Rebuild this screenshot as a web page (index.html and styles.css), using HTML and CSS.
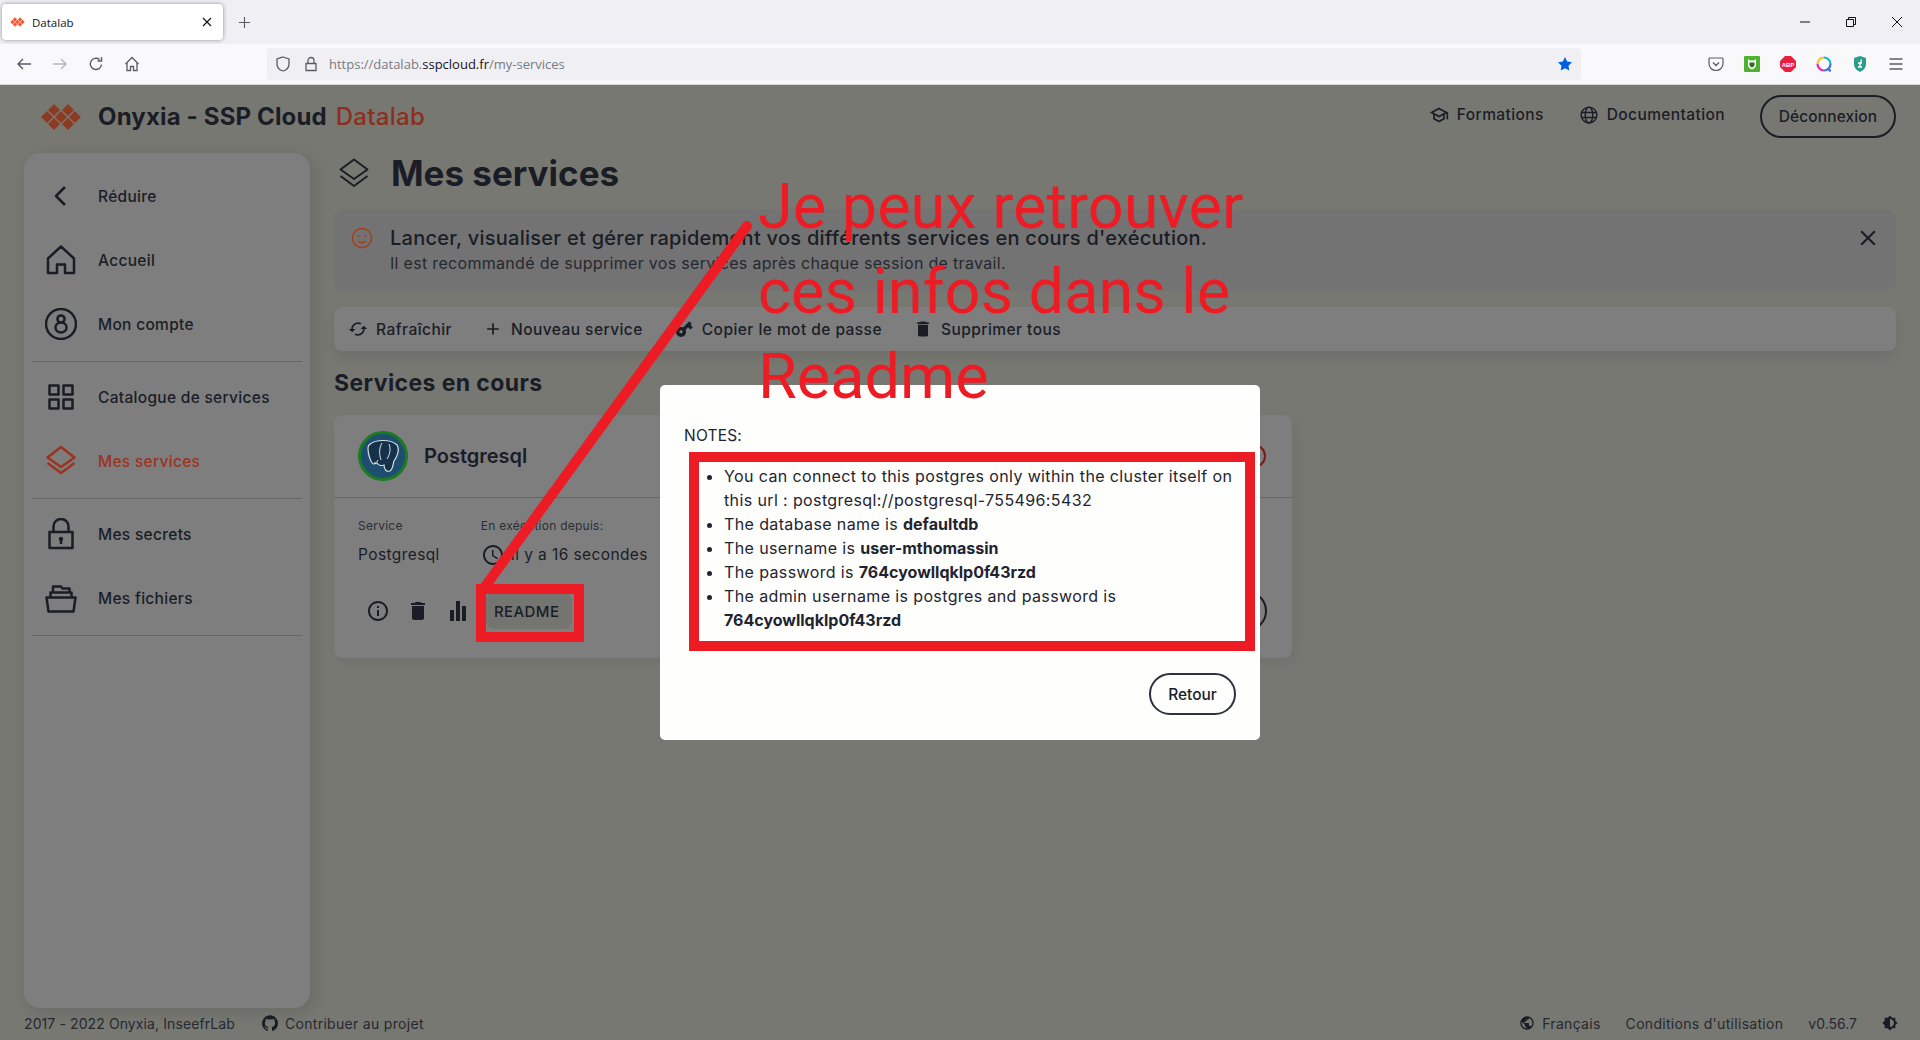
FILE: index.html
```html
<!DOCTYPE html>
<html lang="fr">
<head>
  <meta charset="UTF-8">
  <title>Datalab</title>
  <link rel="stylesheet" href="styles.css">
</head>
<body>

  <!-- browser chrome -->
  <div class="tabstrip">
    <div class="tab">
      <svg class="favicon" viewBox="0 0 42 26"><g fill="#ff562c"><path d="M14 0l6 6-6 6-6-6zM28 0l6 6-6 6-6-6zM7 7l6 6-6 6-6-6zM21 7l6 6-6 6-6-6zM35 7l6 6-6 6-6-6zM14 14l6 6-6 6-6-6zM28 14l6 6-6 6-6-6z"/></g></svg>
      <span class="tab-title">Datalab</span>
      <svg class="tab-close" viewBox="0 0 12 12"><path d="M2 2l8 8M10 2l-8 8" stroke="#15141a" stroke-width="1.2"/></svg>
    </div>
    <svg class="newtab" viewBox="0 0 14 14"><path d="M7 1v12M1 7h12" stroke="#5b5b66" stroke-width="1.2"/></svg>
    <div class="winbtns">
      <svg viewBox="0 0 12 12"><path d="M1 6h10" stroke="#111" stroke-width="1"/></svg>
      <svg viewBox="0 0 12 12"><path d="M1.5 3.5h7v7h-7zM3.5 3.5v-2h7v7h-2" fill="none" stroke="#111" stroke-width="1"/></svg>
      <svg viewBox="0 0 12 12"><path d="M1 1l10 10M11 1L1 11" stroke="#111" stroke-width="1"/></svg>
    </div>
  </div>
  <div class="navbar">
    <div class="navbtns">
      <svg viewBox="0 0 16 16"><path d="M15 8H2M7 3L2 8l5 5" fill="none" stroke="#5b5b66" stroke-width="1.4"/></svg>
      <svg viewBox="0 0 16 16"><path d="M1 8h13M9 3l5 5-5 5" fill="none" stroke="#b4b4ba" stroke-width="1.4"/></svg>
      <svg viewBox="0 0 16 16"><path d="M13.5 8.5A5.6 5.6 0 1 1 11.5 3.6M13.5 1v4h-4" fill="none" stroke="#5b5b66" stroke-width="1.4"/></svg>
      <svg viewBox="0 0 16 16"><path d="M1.5 8L8 1.5 14.5 8M3 7v7.5h3.500v-4h3v4H13V7" fill="none" stroke="#5b5b66" stroke-width="1.3"/></svg>
    </div>
    <div class="urlbar">
      <svg class="url-shield" viewBox="0 0 16 16"><path d="M8 1l6 2v5c0 3.500-2.500 6-6 7-3.500-1-6-3.500-6-7V3z" fill="none" stroke="#5b5b66" stroke-width="1.3"/></svg>
      <svg class="url-lock" viewBox="0 0 16 16"><path d="M3 7.500h10v7H3zM5 7.500V4.500a3 3 0 0 1 6 0v3" fill="none" stroke="#5b5b66" stroke-width="1.3"/></svg>
      <span class="url">https://datalab.<b>sspcloud.fr</b>/my-services</span>
      <svg class="url-star" viewBox="0 0 24 24"><path d="M12 1.500l3.200 6.800 7.300 1-5.300 5.200 1.300 7.400L12 18.400l-6.500 3.500 1.300-7.400L1.500 9.300l7.300-1z" fill="#0060df"/></svg>
    </div>
    <div class="extensions">
      <svg viewBox="0 0 16 16"><path d="M2 2h12a1 1 0 0 1 1 1v4.500C15 11.500 12 14.500 8 14.500S1 11.500 1 7.500V3a1 1 0 0 1 1-1z" fill="none" stroke="#5b5b66" stroke-width="1.2"/><path d="M5 6.500l3 3 3-3" fill="none" stroke="#5b5b66" stroke-width="1.4"/></svg>
      <svg viewBox="0 0 16 16"><rect width="16" height="16" rx="1" fill="#4fb131"/><path d="M4 3l2 1.500h4L12 3v6c0 2-2 3.500-4 4.500C6 12.500 4 11 4 9z" fill="#fff"/><path d="M5.500 6.500h5V9c0 1-1.200 2-2.500 2.500C6.700 11 5.500 10 5.500 9z" fill="#2c6e1c"/></svg>
      <svg viewBox="0 0 16 16"><path d="M5 0h6l5 5v6l-5 5H5l-5-5V5z" fill="#e8203f"/><text x="8" y="10.500" class="abp">ABP</text></svg>
      <svg viewBox="0 0 16 16"><g fill="none" stroke-width="2.200"><path d="M8 1.500A6.500 6.500 0 0 1 14.500 8" stroke="#19b5c9"/><path d="M14.500 8A6.500 6.500 0 0 1 8 14.500" stroke="#3f6fe0"/><path d="M8 14.500A6.500 6.500 0 0 1 1.500 8" stroke="#e22fa5"/><path d="M1.500 8A6.500 6.500 0 0 1 8 1.500" stroke="#f5c518"/><path d="M12 12l2.500 3.500" stroke="#3f6fe0"/></g></svg>
      <svg viewBox="0 0 16 16"><path d="M8 0l6 2v6c0 3.500-2.500 6.500-6 8-3.500-1.500-6-4.500-6-8V2z" fill="#2d9c8a"/><path d="M9.500 3.500L7.500 11M6 7h4M6 11h4" stroke="#fff" stroke-width="1.300" fill="none"/></svg>
      <svg viewBox="0 0 16 16"><path d="M1.500 3h13M1.500 8h13M1.500 13h13" stroke="#5b5b66" stroke-width="1.300"/></svg>
    </div>
  </div>

  <div class="app">
    <header class="topbar">
      <svg class="logo" viewBox="0 0 42 26"><path d="M14 0l6 6-6 6-6-6zM28 0l6 6-6 6-6-6zM7 7l6 6-6 6-6-6zM21 7l6 6-6 6-6-6zM35 7l6 6-6 6-6-6zM14 14l6 6-6 6-6-6zM28 14l6 6-6 6-6-6z"/></svg>
      <div class="brand">Onyxia - SSP Cloud <span>Datalab</span></div>
      <a class="toplink">
        <svg viewBox="0 0 24 24"><path d="M12 3 1 9l4 2.180v6L12 21l7-3.820v-6l2-1.090V17h2V9L12 3zm6.820 6L12 12.720 5.180 9 12 5.280 18.820 9zM17 15.990l-5 2.730-5-2.730v-3.720L12 15l5-2.730v3.720z"/></svg>
        Formations
      </a>
      <a class="toplink">
        <svg viewBox="0 0 24 24" class="outline"><circle cx="12" cy="12" r="9.500"/><ellipse cx="12" cy="12" rx="4.500" ry="9.500"/><path d="M3 9h18M3 15h18"/></svg>
        Documentation
      </a>
      <button class="logout">Déconnexion</button>
    </header>

    <div class="layout">
      <nav class="sidebar">
        <div class="side-item">
          <svg viewBox="0 0 32 32"><path d="M20 7l-9 9 9 9" class="st"/></svg>
          Réduire
        </div>
        <div class="side-item">
          <svg viewBox="0 0 32 32"><path d="M3 14.500L16 2.500l13 12V29H20v-8.500h-8V29H3z" class="st"/></svg>
          Accueil
        </div>
        <div class="side-item">
          <svg viewBox="0 0 32 32"><circle cx="16" cy="16" r="15" class="st"/><circle cx="16" cy="11" r="3.600" class="st"/><ellipse cx="16" cy="19.500" rx="5.500" ry="5" class="st"/></svg>
          Mon compte
        </div>
        <hr>
        <div class="side-item">
          <svg viewBox="0 0 32 32"><path d="M4.500 4.500h9v9h-9zM18.500 4.500h9v9h-9zM4.500 18.500h9v9h-9zM18.500 18.500h9v9h-9z" class="st"/></svg>
          Catalogue de services
        </div>
        <div class="side-item active">
          <svg viewBox="0 0 32 32"><path d="M16 2l13.500 10.500L16 22 2.500 12.500zM2.500 18L16 28l13.500-10" class="st"/></svg>
          Mes services
        </div>
        <hr>
        <div class="side-item">
          <svg viewBox="0 0 32 32"><path d="M4.500 14h23v16h-23zM8.500 14V8.500a7.500 7.500 0 0 1 15 0V14" class="st"/><circle cx="16" cy="21" r="2.200" class="fl"/><path d="M15 21h2l.3 5h-2.600z" class="fl"/></svg>
          Mes secrets
        </div>
        <div class="side-item">
          <svg viewBox="0 0 32 32"><path d="M1.500 15.500h29l-2 14h-25zM5.500 15.500v-5h21v5M8 10.500V4.500h8l1.500 2h7v4" class="st"/></svg>
          Mes fichiers
        </div>
        <hr>
      </nav>

      <main class="main">
        <div class="page-title">
          <svg viewBox="0 0 32 32"><path d="M16 2.500l13.500 10L16 22 2.500 12.500zM2.500 19L16 29l13.500-10" class="st"/></svg>
          <h1>Mes services</h1>
        </div>

        <div class="alert">
          <svg class="smiley" viewBox="0 0 24 24"><circle cx="12" cy="12" r="9.500"/><circle cx="8.500" cy="10" r="1" class="dot"/><circle cx="15.500" cy="10" r="1" class="dot"/><path d="M8.500 15.500c2 1.500 5 1.500 7 0"/></svg>
          <div class="alert-text">
            <p class="alert-main">Lancer, visualiser et gérer rapidement vos différents services en cours d'exécution.</p>
            <p class="alert-sub">Il est recommandé de supprimer vos services après chaque session de travail.</p>
          </div>
          <svg class="alert-close" viewBox="0 0 24 24"><path d="M19 6.410 17.590 5 12 10.590 6.410 5 5 6.410 10.590 12 5 17.590 6.410 19 12 13.410 17.590 19 19 17.590 13.410 12z"/></svg>
        </div>

        <div class="toolbar">
          <div class="tool"><svg viewBox="0 0 24 24"><path d="M19 8l-4 4h3c0 3.310-2.690 6-6 6-1.010 0-1.970-.25-2.800-.7l-1.460 1.460C8.970 19.540 10.430 20 12 20c4.420 0 8-3.580 8-8h3l-4-4zM6 12c0-3.310 2.690-6 6-6 1.010 0 1.970.25 2.800.7l1.460-1.460C15.030 4.460 13.570 4 12 4c-4.420 0-8 3.580-8 8H1l4 4 4-4H6z"/></svg>Rafraîchir</div>
          <div class="tool"><svg viewBox="0 0 24 24"><path d="M19 13h-6v6h-2v-6H5v-2h6V5h2v6h6v2z"/></svg>Nouveau service</div>
          <div class="tool"><svg viewBox="0 0 24 24"><path transform="rotate(-45 12 12)" d="M12.650 10C11.830 7.670 9.610 6 7 6c-3.310 0-6 2.690-6 6s2.690 6 6 6c2.610 0 4.830-1.670 5.650-4H17v4h4v-4h2v-4H12.650zM7 14c-1.100 0-2-.9-2-2s.9-2 2-2 2 .9 2 2-.9 2-2 2z"/></svg>Copier le mot de passe</div>
          <div class="tool"><svg viewBox="0 0 24 24"><path d="M6 19c0 1.100.9 2 2 2h8c1.100 0 2-.9 2-2V7H6v12zM19 4h-3.500l-1-1h-5l-1 1H5v2h14V4z"/></svg>Supprimer tous</div>
        </div>

        <h2 class="section-title">Services en cours</h2>

        <section class="card">
          <div class="card-head">
            <svg class="pg-logo" viewBox="0 0 50 50">
              <circle cx="25" cy="25" r="23.500" fill="#1d4d6f" stroke="#1c7a25" stroke-width="3"/>
              <path d="M11 14c6-6 22-6 28 0 3 5 0 12-3 16-1 3-1 8-4 10-3 1-6-1-6-6-3 1-6 0-7-2l-3 1c-3 0-6-10-6-15 0-2 0-3 1-4z" fill="#16324a" stroke="#d8dee2" stroke-width="1.200"/>
              <path d="M24 12c-3 5-3 11-1 17M31 13c2 5 1 10-2 15M16 32c2 0 3-1 4-3" fill="none" stroke="#d8dee2" stroke-width="1"/>
            </svg>
            <span class="card-name">Postgresql</span>
            <span class="status-ring"></span>
          </div>
          <div class="card-body">
            <div class="info-row">
              <div class="info-col first">
                <span class="info-label">Service</span>
                <span class="info-value">Postgresql</span>
              </div>
              <div class="info-col">
                <span class="info-label">En exécution depuis:</span>
                <span class="info-value with-icon">
                  <svg viewBox="0 0 24 24"><path d="M12 2C6.480 2 2 6.480 2 12s4.480 10 10 10 10-4.480 10-10S17.520 2 12 2zm0 18c-4.410 0-8-3.590-8-8s3.590-8 8-8 8 3.590 8 8-3.590 8-8 8zm.5-13H11v6l5.200 3.200.8-1.300-4.500-2.700z"/></svg>
                  Il y a 16 secondes
                </span>
              </div>
            </div>
            <div class="actions">
              <span class="action"><svg viewBox="0 0 24 24"><path d="M11 7h2v2h-2zm0 4h2v6h-2zm1-9C6.480 2 2 6.480 2 12s4.480 10 10 10 10-4.480 10-10S17.520 2 12 2zm0 18c-4.410 0-8-3.590-8-8s3.590-8 8-8 8 3.590 8 8-3.590 8-8 8z"/></svg></span>
              <span class="action"><svg viewBox="0 0 24 24"><path d="M6 19c0 1.100.9 2 2 2h8c1.100 0 2-.9 2-2V7H6v12zM19 4h-3.500l-1-1h-5l-1 1H5v2h14V4z"/></svg></span>
              <span class="action"><svg viewBox="0 0 24 24"><path d="M4 11h4v11H4zM10 2h4v20h-4zM16 7h4v15h-4z"/></svg></span>
              <button class="readme">README</button>
              <span class="open-btn"></span>
            </div>
          </div>
        </section>
      </main>
    </div>

    <footer class="footer">
      <span class="copyright">2017 - 2022 Onyxia, InseefrLab</span>
      <span class="foot-link">
        <svg viewBox="0 0 24 24"><path d="M12 .5C5.370.5 0 5.870 0 12.500c0 5.300 3.440 9.800 8.200 11.390.6.110.82-.26.82-.58v-2.030c-3.340.73-4.040-1.610-4.040-1.610-.55-1.390-1.330-1.760-1.330-1.760-1.090-.74.08-.73.08-.73 1.200.09 1.840 1.240 1.840 1.240 1.070 1.830 2.810 1.300 3.500 1 .11-.78.42-1.310.76-1.610-2.670-.3-5.470-1.330-5.470-5.930 0-1.310.47-2.380 1.240-3.220-.13-.3-.54-1.520.11-3.180 0 0 1.010-.32 3.300 1.230a11.500 11.500 0 0 1 6 0c2.290-1.550 3.300-1.230 3.300-1.230.65 1.660.24 2.880.12 3.180.77.84 1.230 1.910 1.230 3.220 0 4.610-2.810 5.630-5.480 5.920.43.37.81 1.100.81 2.220v3.290c0 .32.22.7.82.58A12 12 0 0 0 24 12.500C24 5.870 18.630.5 12 .5z"/></svg>
        Contribuer au projet
      </span>
      <span class="foot-link lang">
        <svg viewBox="0 0 24 24"><path d="M12 2C6.480 2 2 6.480 2 12s4.480 10 10 10 10-4.480 10-10S17.520 2 12 2zm-1 17.930c-3.950-.49-7-3.850-7-7.930 0-.62.08-1.210.21-1.790L9 15v1c0 1.100.9 2 2 2v1.930zm6.900-2.540c-.26-.81-1-1.390-1.900-1.390h-1v-3c0-.55-.45-1-1-1H8v-2h2c.55 0 1-.45 1-1V7h2c1.100 0 2-.9 2-2v-.41c2.930 1.190 5 4.060 5 7.410 0 2.080-.8 3.970-2.100 5.390z"/></svg>
        Français
      </span>
      <span>Conditions d'utilisation</span>
      <span class="version">v0.56.7</span>
      <svg class="theme" viewBox="0 0 24 24"><path d="M20 15.310 23.310 12 20 8.690V4h-4.690L12 .69 8.690 4H4v4.690L.69 12 4 15.310V20h4.690L12 23.310 15.310 20H20v-4.690zM12 18V6c3.310 0 6 2.690 6 6s-2.690 6-6 6z"/></svg>
    </footer>

    <!-- readme dialog -->
    <div class="dialog-wrap">
      <div class="dialog">
        <p class="notes">NOTES:</p>
        <ul class="notes-list">
          <li>You can connect to this postgres only within the cluster itself on<br>this url : postgresql://postgresql-755496:5432</li>
          <li>The database name is <b>defaultdb</b></li>
          <li>The username is <b>user-mthomassin</b></li>
          <li>The password is <b>764cyowllqklp0f43rzd</b></li>
          <li>The admin username is postgres and password is<br><b>764cyowllqklp0f43rzd</b></li>
        </ul>
        <div class="dialog-foot">
          <button class="back">Retour</button>
        </div>
      </div>
    </div>
  </div>

  <!-- red annotations drawn on top of the capture -->
  <svg class="anno-line" viewBox="0 0 1920 1040"><path d="M484 588L747 226" stroke="#ed1c24" stroke-width="10" stroke-linecap="round"/></svg>
  <div class="anno-box"></div>
  <div class="anno-text">Je peux retrouver<br>ces infos dans le<br>Readme</div>

</body>
</html>
```
FILE: styles.css
```css
* {
  box-sizing: border-box;
}

html, body {
  margin: 0;
  height: 1040px;
  overflow: hidden;
}

body {
  position: relative;
  display: flex;
  flex-direction: column;
  font-family: Inter, "Noto Sans", sans-serif;
  color: #1a1d26;
  background: #787873;
}

p, h1, h2 {
  margin: 0;
}

button {
  font-family: inherit;
  cursor: pointer;
}

/* browser chrome */
.tabstrip {
  height: 44px;
  background: #f0f0f4;
  display: flex;
  align-items: center;
  flex: none;
}

.tab {
  width: 221px;
  height: 36px;
  margin-left: 2px;
  background: #fff;
  border-radius: 4px;
  box-shadow: 0 0 4px rgba(0, 0, 0, 0.4);
  display: flex;
  align-items: center;
  padding-left: 8px;
  font-family: "Open Sans", sans-serif;
  font-size: 11.5px;
  color: #15141a;
}

.favicon {
  width: 15px;
  height: 10px;
  margin-right: 7px;
}

.tab-title {
  flex: 1;
}

.tab-close {
  width: 12px;
  height: 12px;
  margin-right: 10px;
}

.newtab {
  width: 13px;
  height: 13px;
  margin-left: 15px;
}

.winbtns {
  margin-left: auto;
  display: flex;
  gap: 34px;
  padding-right: 17px;
}

.winbtns svg {
  width: 12px;
  height: 12px;
}

.navbar {
  height: 41px;
  background: #f9f9fb;
  border-bottom: 1px solid #d8d8dc;
  display: flex;
  align-items: center;
  flex: none;
}

.navbtns {
  width: 267px;
  display: flex;
  gap: 20px;
  padding-left: 16px;
}

.navbtns svg {
  width: 16px;
  height: 16px;
}

.urlbar {
  width: 1314px;
  height: 32px;
  background: #f0f0f4;
  border-radius: 4px;
  display: flex;
  align-items: center;
  padding: 0 8px;
  font-family: "Open Sans", sans-serif;
  font-size: 13px;
  color: #7a7a82;
}

.urlbar svg {
  width: 16px;
  height: 16px;
  flex: none;
}

.url-shield {
  margin-right: 12px;
}

.url-lock {
  margin-right: 10px;
}

.url {
  flex: 1;
}

.url b {
  font-weight: 400;
  color: #15141a;
}

.extensions {
  flex: 1;
  display: flex;
  justify-content: flex-end;
  gap: 20px;
  padding-right: 16px;
}

.extensions svg {
  width: 16px;
  height: 16px;
}

.abp {
  font-family: "Liberation Sans", sans-serif;
  font-size: 6px;
  font-weight: 700;
  fill: #fff;
  text-anchor: middle;
}

/* app */
.app {
  position: relative;
  flex: 1;
  display: flex;
  flex-direction: column;
  min-height: 0;
}

.topbar {
  height: 68px;
  flex: none;
  display: flex;
  align-items: center;
  padding: 0 24px 5px 40px;
}

.logo {
  width: 42px;
  height: 26px;
  fill: #8d3a22;
  margin-right: 16px;
}

.brand {
  font-size: 24px;
  font-weight: 700;
  flex: 1;
  letter-spacing: 0.15px;
}

.brand span {
  color: #8d2f1c;
  font-weight: 500;
  margin-left: 3px;
  letter-spacing: 0.3px;
}

.toplink {
  display: flex;
  align-items: center;
  gap: 8px;
  font-size: 15.5px;
  font-weight: 500;
  letter-spacing: 0.4px;
  margin-right: 35px;
  padding-bottom: 4px;
}

.toplink svg {
  width: 20px;
  height: 20px;
  fill: #1a1d26;
}

.toplink .outline {
  fill: none;
  stroke: #1a1d26;
  stroke-width: 1.7;
}

.logout {
  width: 136px;
  height: 43px;
  border: 2px solid #1a1d26;
  border-radius: 22px;
  background: none;
  color: #1a1d26;
  font-size: 15.5px;
  font-weight: 500;
  letter-spacing: 0.1px;
}

.layout {
  flex: 1;
  display: flex;
  gap: 24px;
  padding: 0 24px;
  min-height: 0;
}

/* sidebar */
.sidebar {
  width: 286px;
  flex: none;
  background: #7e7e7e;
  border-radius: 16px;
  padding-top: 11px;
  box-shadow: 4px 4px 16px rgba(0, 0, 0, 0.12);
}

.side-item {
  height: 64px;
  display: flex;
  align-items: center;
  gap: 21px;
  padding-left: 21px;
  font-size: 15.5px;
  font-weight: 500;
  letter-spacing: 0.3px;
}

.side-item svg {
  width: 32px;
  height: 32px;
}

.st {
  fill: none;
  stroke: currentColor;
  stroke-width: 2.5;
  stroke-linejoin: round;
}

.fl {
  fill: currentColor;
}

.side-item.active {
  color: #9c3320;
}

.sidebar hr {
  margin: 5px 8px 3px;
  height: 1px;
  border: 0;
  background: #666668;
}

/* main column */
.main {
  flex: 1;
  min-width: 0;
}

.page-title {
  height: 40px;
  display: flex;
  align-items: center;
  gap: 21px;
  padding-left: 4px;
}

.page-title svg {
  width: 32px;
  height: 32px;
}

.page-title .st {
  stroke-width: 2;
}

.page-title h1 {
  font-size: 35px;
  font-weight: 700;
}

.alert {
  margin-top: 16px;
  height: 82px;
  background: #737373;
  border-radius: 10px;
  display: flex;
  padding: 17px 16px 0;
  gap: 16px;
}

.smiley {
  width: 24px;
  height: 24px;
  fill: none;
  stroke: #a3401f;
  stroke-width: 1.6;
}

.smiley .dot {
  fill: #a3401f;
  stroke: none;
}

.alert-text {
  flex: 1;
}

.alert-main {
  font-size: 20px;
  font-weight: 500;
  line-height: 24px;
  letter-spacing: 0.26px;
}

.alert-sub {
  font-size: 16px;
  line-height: 26px;
  letter-spacing: 0.31px;
  color: #26282f;
}

.alert-close {
  width: 26px;
  height: 26px;
  margin: -1px -1px 0 0;
  fill: #1a1d26;
}

.toolbar {
  margin-top: 16px;
  height: 44px;
  background: #7e7e7e;
  border-radius: 8px;
  box-shadow: 0 6px 12px rgba(0, 0, 0, 0.08);
  display: flex;
  align-items: center;
  gap: 31px;
  padding-left: 14px;
}

.tool {
  display: flex;
  align-items: center;
  gap: 8px;
  font-size: 15.5px;
  font-weight: 500;
  letter-spacing: 0.45px;
}

.tool svg {
  width: 20px;
  height: 20px;
  fill: #1a1d26;
}

.section-title {
  margin-top: 18px;
  height: 28px;
  line-height: 28px;
  font-size: 23px;
  font-weight: 700;
  letter-spacing: 0.4px;
}

/* service card */
.card {
  margin-top: 18px;
  width: 958px;
  height: 243px;
  background: #7e7e7e;
  border-radius: 8px;
  box-shadow: 4px 4px 12px rgba(0, 0, 0, 0.06);
}

.card-head {
  height: 83px;
  display: flex;
  align-items: center;
  gap: 16px;
  padding: 0 24px;
  border-bottom: 1px solid #666668;
}

.pg-logo {
  width: 50px;
  height: 50px;
}

.card-name {
  flex: 1;
  font-size: 20px;
  font-weight: 600;
}

.status-ring {
  width: 24px;
  height: 24px;
  margin-right: 2px;
  border: 2px solid #7d1a12;
  border-radius: 50%;
}

.card-body {
  padding: 20px 25px 0 24px;
}

.info-row {
  display: flex;
  gap: 41px;
}

.info-col {
  display: flex;
  flex-direction: column;
}

.info-label {
  height: 16px;
  line-height: 16px;
  font-size: 12px;
  letter-spacing: 0.25px;
  color: #2b2d33;
}

.info-value {
  height: 26px;
  margin-top: 8px;
  line-height: 26px;
  font-size: 15.5px;
  letter-spacing: 0.4px;
}

.with-icon {
  display: flex;
  align-items: center;
  gap: 6px;
}

.with-icon svg {
  width: 24px;
  height: 24px;
  fill: #1a1d26;
}

.actions {
  margin-top: 23px;
  height: 40px;
  display: flex;
  align-items: center;
}

.action {
  width: 40px;
  height: 40px;
  display: flex;
  align-items: center;
  justify-content: center;
}

.action svg {
  width: 24px;
  height: 24px;
  fill: #1a1d26;
}

.readme {
  margin-left: 8px;
  width: 86px;
  height: 36px;
  border: 0;
  border-radius: 8px;
  background: #747470;
  color: #1a1d26;
  font-size: 15px;
  font-weight: 500;
  letter-spacing: 0.4px;
  text-align: left;
  padding: 0 0 0 8px;
}

.open-btn {
  margin-left: auto;
  width: 100px;
  height: 40px;
  border: 2px solid #1a1d26;
  border-radius: 20px;
}

/* footer */
.footer {
  height: 32px;
  flex: none;
  display: flex;
  align-items: center;
  padding: 0 22px 2px 24px;
  gap: 25px;
  font-size: 14px;
  letter-spacing: 0.3px;
  color: #26282f;
}

.copyright {
  letter-spacing: 0.1px;
}

.version {
  letter-spacing: 0;
}

.foot-link {
  display: flex;
  align-items: center;
  gap: 7px;
  margin-left: 2px;
}

.foot-link svg {
  width: 16px;
  height: 16px;
  fill: #1a1d26;
}

.foot-link.lang {
  margin-left: auto;
}

.theme {
  width: 16px;
  height: 16px;
  fill: #1a1d26;
}

/* dialog */
.dialog-wrap {
  position: absolute;
  inset: 0;
  display: flex;
  align-items: center;
  justify-content: center;
}

.dialog {
  width: 600px;
  height: 355px;
  background: #fefefd;
  border-radius: 5px;
  padding: 40px 24px 0;
  font-size: 16px;
  letter-spacing: 0.38px;
  color: #1f2430;
}

.notes {
  font-size: 15.5px;
  letter-spacing: 0.2px;
  line-height: 22px;
}

.notes-list {
  margin: 5px 0 0 5px;
  width: 566px;
  height: 199px;
  border: 10px solid #ed1c24;
  padding: 2px 0 0 25px;
  line-height: 24px;
  white-space: nowrap;
}

.notes-list b {
  font-weight: 700;
  letter-spacing: 0;
}

.dialog-foot {
  margin-top: 22px;
  display: flex;
  justify-content: flex-end;
}

.back {
  width: 87px;
  height: 42px;
  border: 2px solid #2c323f;
  border-radius: 21px;
  background: none;
  color: #1a1d26;
  font-size: 15.5px;
  font-weight: 500;
}

/* annotations */
.anno-line {
  position: absolute;
  left: 0;
  top: 0;
  width: 1920px;
  height: 1040px;
}

.anno-box {
  position: absolute;
  left: 476px;
  top: 584px;
  width: 108px;
  height: 58px;
  border: 10px solid #ed1c24;
}

.anno-text {
  position: absolute;
  left: 758px;
  top: 164px;
  font-family: Roboto, sans-serif;
  font-size: 63px;
  line-height: 85px;
  color: #ed1c24;
  white-space: nowrap;
}
```
